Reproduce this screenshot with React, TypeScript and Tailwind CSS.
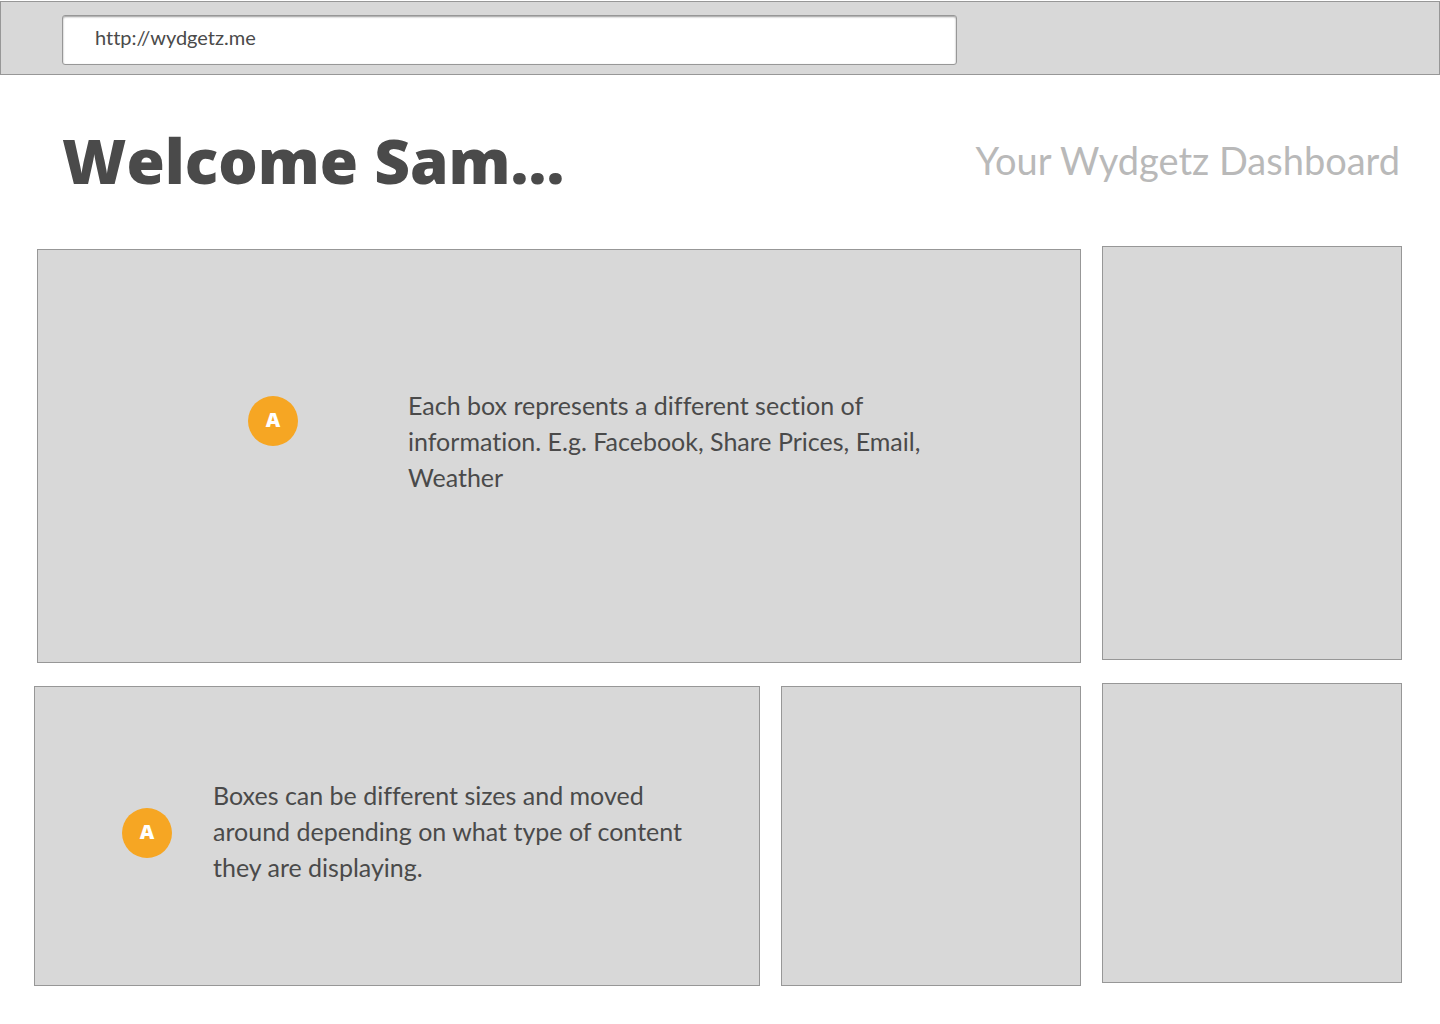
function Marker({ className = "" }: { className?: string }) {
  return (
    <span className={`flex size-[50px] shrink-0 items-center justify-center rounded-full bg-[#f6a623] pb-0.5 font-['Open_Sans',sans-serif] text-xl font-extrabold text-white ${className}`}>
      A
    </span>
  );
}

const box = "border border-[#979797] bg-[#d8d8d8]";

export default function App() {
  return (
    <div className="min-h-screen bg-white pt-px pb-9 font-['Lato',sans-serif] text-[#4a4a4a] [font-variant-ligatures:none]">
      <header className="border border-[#979797] bg-[#d8d8d8] pt-[13px] pr-6 pb-[9px] pl-[61px]">
        <input
          type="text"
          aria-label="Address"
          defaultValue="http://wydgetz.me"
          className="block h-[50px] w-full max-w-[895px] rounded-[3px] border border-[#979797] bg-white px-8 pb-1.5 text-xl text-[#4a4a4a] shadow-[inset_0_1px_2px_rgba(0,0,0,0.4)] outline-none"
        />
      </header>

      <div className="flex items-center justify-between pt-[49px] pr-10 pb-[50px] pl-[62px]">
        <h1 className="font-['Open_Sans',sans-serif] text-[62px] leading-[72px] font-extrabold">Welcome Sam...</h1>
        <p className="text-[38px] leading-[72px] text-[#b9b9b9]">Your Wydgetz Dashboard</p>
      </div>

      <main className="flex gap-[21px] pr-[38px] pl-[34px]">
        <div className="flex min-w-0 flex-1 flex-col gap-[23px] pt-[3px]">
          <section className={`ml-[3px] flex h-[414px] items-start pt-[137px] pl-[210px] ${box}`}>
            <Marker className="mt-[9px]" />
            <p className="ml-[110px] w-[530px] text-[25px] leading-9">
              Each box represents a different section of information. E.g. Facebook, Share Prices, Email, Weather
            </p>
          </section>
          <div className="flex gap-[21px]">
            <section className={`flex h-[300px] min-w-0 flex-1 items-start pt-[90px] pl-[87px] ${box}`}>
              <Marker className="mt-[31px]" />
              <p className="ml-[41px] w-[490px] text-[25px] leading-9">
                Boxes can be different sizes and moved around depending on what type of content they are displaying.
              </p>
            </section>
            <section aria-label="Empty box" className={`w-[300px] shrink-0 ${box}`} />
          </div>
        </div>
        <div className="flex w-[300px] shrink-0 flex-col gap-[23px]">
          <section aria-label="Empty box" className={`h-[414px] ${box}`} />
          <section aria-label="Empty box" className={`h-[300px] ${box}`} />
        </div>
      </main>
    </div>
  );
}
